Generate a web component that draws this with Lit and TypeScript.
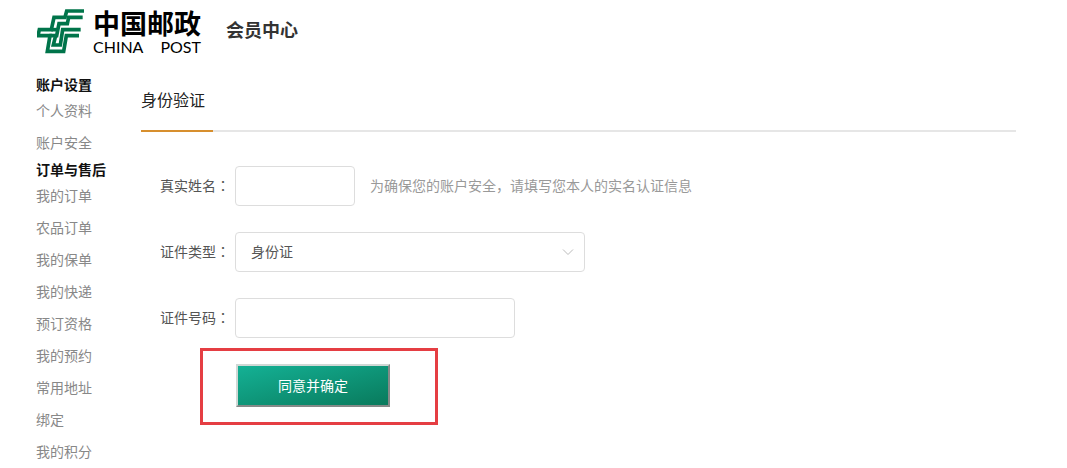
import { LitElement, html, css } from "lit";
import { customElement } from "lit/decorators.js";

const groups = [
  { title: "账户设置", items: ["个人资料", "账户安全"] },
  {
    title: "订单与售后",
    items: ["我的订单", "农品订单", "我的保单", "我的快递", "预订资格", "我的预约", "常用地址", "绑定", "我的积分"],
  },
];

@customElement("post-logo")
class PostLogo extends LitElement {
  static styles = css`
    :host { display: flex; gap: 8px; align-items: center; color: #000; }
    .mark { display: block; width: 48px; height: 46px; }
    .words { display: flex; flex-direction: column; }
    .cn { font-size: 27px; line-height: 32px; font-weight: 700; }
    .en { display: flex; justify-content: space-between; font-family: Lato, "Liberation Sans", sans-serif; font-size: 16px; line-height: 16px; }
  `;
  render() {
    return html`
      <svg class="mark" viewBox="9 9 144 138" fill="none" stroke="#00744a" stroke-width="11" aria-hidden="true">
        <path d="M150 18H98L93 37H60L52 74H16L12 92H48L40 139H89L97 92H135" />
        <path d="M146 37H104L100 56H75L68 92H46" />
        <path d="M140 74H86L79 120H58L65 92" />
        <path d="M52 74H70" />
      </svg>
      <div class="words">
        <span class="cn">中国邮政</span>
        <span class="en"><span>CHINA</span><span>POST</span></span>
      </div>
    `;
  }
}

@customElement("app-root")
class AppRoot extends LitElement {
  static styles = css`
    :host {
      display: block;
      font-family: "Noto Sans CJK SC", sans-serif;
      font-size: 14px;
      line-height: 20px;
      color: #555;
      background: #fff;
    }
    .header { display: flex; align-items: center; gap: 25px; padding: 7px 37px 0; }
    .title { margin: 0; padding-bottom: 4px; font-size: 18px; line-height: 28px; color: #333; }
    .page { display: flex; gap: 35px; padding: 19px 51px 0 36px; }
    .side { flex: none; width: 70px; }
    .group { margin: 0; font-size: 14px; line-height: 20px; color: #111; }
    .list + .group { margin-top: 1px; }
    .list { margin: 0; padding: 0; list-style: none; }
    .item { line-height: 32px; }
    .link { color: #888; text-decoration: none; }
    .main { flex: 1; }
    .tabs { display: flex; border-bottom: 2px solid #e6e6e6; }
    .tab {
      margin: 0 0 -2px; width: 72px; border-bottom: 2px solid #d78f2e;
      padding: 13px 0 19px; font-size: 16px; line-height: 24px; font-weight: 400; color: #222;
    }
    .form { display: grid; gap: 26px; padding: 34px 0 0 19px; }
    .row { display: flex; align-items: center; }
    .label { width: 75px; }
    .label, .hint { padding-bottom: 2px; }
    .mid { font-family: "Noto Sans CJK TC", sans-serif; }
    .field {
      box-sizing: border-box; height: 40px; margin: 0; border: 1px solid #ddd; border-radius: 4px;
      padding: 0 15px 2px; background: #fff; font: inherit; color: #555;
    }
    .name { width: 120px; }
    .number { width: 280px; }
    .picker { display: grid; width: 350px; align-items: center; }
    .select { grid-area: 1 / 1; width: 100%; appearance: none; }
    .arrow { grid-area: 1 / 1; justify-self: end; margin-right: 10px; width: 14px; height: 14px; pointer-events: none; }
    .hint { margin-left: 15px; color: #999; }
    .frame { box-sizing: border-box; width: 238px; margin: 10px 0 0 59px; border: 3px solid #e53e43; padding: 13px 33px 15px; }
    .submit {
      display: block; box-sizing: border-box; width: 154px; height: 43px; margin: 0; padding: 0 0 2px;
      border: 2px solid; border-color: #d0d8d5 #858a88 #858a88 #d0d8d5;
      background: linear-gradient(to bottom right, #14b195, #097a5c); color: #fff; font: inherit;
    }
  `;
  render() {
    return html`
      <header class="header"><post-logo></post-logo><h1 class="title">会员中心</h1></header>
      <div class="page">
        <nav class="side">
          ${groups.map((g) => html`
            <h2 class="group">${g.title}</h2>
            <ul class="list">${g.items.map((i) => html`<li class="item"><a class="link" href="#">${i}</a></li>`)}</ul>
          `)}
        </nav>
        <main class="main">
          <div class="tabs"><h2 class="tab">身份验证</h2></div>
          <form class="form">
            <div class="row">
              <label class="label" for="name">真实姓名<span class="mid">：</span></label>
              <input class="field name" id="name" type="text" />
              <span class="hint">为确保您的账户安全，请填写您本人的实名认证信息</span>
            </div>
            <div class="row">
              <label class="label" for="kind">证件类型<span class="mid">：</span></label>
              <div class="picker">
                <select class="field select" id="kind"><option>身份证</option></select>
                <svg class="arrow" viewBox="0 0 14 14" fill="none" stroke="#bbb" aria-hidden="true"><path d="M2 4.5l5 5 5-5" /></svg>
              </div>
            </div>
            <div class="row">
              <label class="label" for="number">证件号码<span class="mid">：</span></label>
              <input class="field number" id="number" type="text" />
            </div>
          </form>
          <div class="frame"><button class="submit" type="button">同意并确定</button></div>
        </main>
      </div>
    `;
  }
}
